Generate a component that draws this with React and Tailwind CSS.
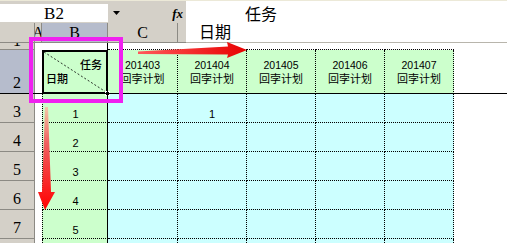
const cjk = { fontFamily: '"Liberation Sans", "Noto Sans CJK SC", sans-serif' };
const serif = { fontFamily: '"Liberation Serif", serif' };

const months = ['201403', '201404', '201405', '201406', '201407'];
const dataRows = [
  { n: 3, b: '1', c: ['', '1', '', '', ''] },
  { n: 4, b: '2', c: ['', '', '', '', ''] },
  { n: 5, b: '3', c: ['', '', '', '', ''] },
  { n: 6, b: '4', c: ['', '', '', '', ''] },
  { n: 7, b: '5', c: ['', '', '', '', ''] },
];

function RowHeader({ label, active, className = '' }) {
  return (
    <div
      className={`flex items-end justify-center overflow-hidden border-r border-b border-[#8c8a84] text-[16px] leading-[18px] text-black ${
        active ? 'bg-[#b6bccc]' : 'bg-[#d4d0c8]'
      } ${className}`}
      style={serif}
    >
      <span className="pb-[1px]">{label}</span>
    </div>
  );
}

export default function App() {
  return (
    <div className="relative w-[507px] h-[243px] overflow-hidden bg-white" style={cjk}>
      {/* Name box + formula bar */}
      <div className="flex h-[43px]">
        <div className="w-[186px] flex flex-col bg-[#d4d0c8]">
          <div className="h-[4px] border-t border-[#ece9d8]" />
          <div className="flex h-[18px]">
            <div className="w-[108px] bg-white flex items-center justify-center text-[17px] leading-none" style={serif}>
              B2
            </div>
            <div className="w-[17px] flex items-center justify-center">
              <svg width="7" height="4" viewBox="0 0 7 4">
                <polygon points="0,0 7,0 3.5,4" fill="#000" />
              </svg>
            </div>
            <div className="flex-1 flex items-center justify-end pr-[3px] text-[13px] italic font-bold leading-none" style={serif}>
              fx
            </div>
          </div>
          <div className="h-[1px]" />
          <div className="flex h-[20px] border-b border-[#8c8a84] text-[16px] leading-none" style={serif}>
            <div className="w-[35px] border-r border-[#8c8a84]" />
            <div className="w-[7px] border-r border-[#8c8a84] overflow-hidden flex items-center justify-center">A</div>
            <div className="w-[66px] bg-[#b6bccc] border-r border-[#8c8a84] flex items-center justify-center">B</div>
            <div className="w-[70px] border-r border-[#8c8a84] flex items-center justify-center">C</div>
            <div className="flex-1" />
          </div>
        </div>
        <div className="flex-1 flex flex-col bg-[#d4d0c8]">
          <div className="h-[4px] border-t border-[#ece9d8]" />
          <div className="flex-1 bg-white border-b border-[#b8b5ac] pl-[13px] pt-[5px] text-[16px] leading-[18px] text-black">
            <div className="pl-[46px]">任务</div>
            <div>日期</div>
          </div>
        </div>
      </div>

      {/* Sheet */}
      <div className="relative grid grid-cols-[35px_7px_66px_70px_69px_69px_69px_69px_53px] grid-rows-[7px_44px_29px_29px_29px_29px_29px_6px]">
        {/* row 1 */}
        <RowHeader label="1" className="!items-start [&>span]:-mt-[11px]" />
        <div />
        <div />
        {months.map((m) => (
          <div key={m} className="border-b border-dotted border-black" />
        ))}
        <div />

        {/* row 2 */}
        <RowHeader label="2" active />
        <div />
        <div className="relative bg-[#ccffcc] border-2 border-black flex flex-col justify-center text-[11px] leading-[14px] font-medium">
          <svg className="absolute inset-0" width="62" height="40" viewBox="0 0 62 40">
            <line x1="0" y1="0" x2="62" y2="40" stroke="#000" strokeWidth="0.8" strokeDasharray="2 2" />
          </svg>
          <div className="relative self-end pr-[4px]">任务</div>
          <div className="relative self-start pl-[2px]">日期</div>
          <div className="absolute -right-[4px] -bottom-[4px] w-[5px] h-[5px] bg-black border border-white" />
        </div>
        {months.map((m) => (
          <div
            key={m}
            className="bg-[#ccffcc] border-r border-dotted border-black flex flex-col items-center justify-center text-[11px] leading-[14px] text-black"
          >
            <span className="text-[10.5px]">{m}</span>
            <span>回孛计划</span>
          </div>
        ))}
        <div />

        {/* rows 3-7 */}
        {dataRows.map((r) => (
          <div key={r.n} className="contents">
            <RowHeader label={r.n} />
            <div />
            <div className="bg-[#ccffcc] border-l border-b border-dotted border-black flex items-end justify-center pb-[1px] text-[11px] leading-[14px]">
              {r.b}
            </div>
            {r.c.map((v, i) => (
              <div
                key={i}
                className="bg-[#ccffff] border-r border-b border-dotted border-black flex items-end justify-center pb-[1px] text-[11px] leading-[14px]"
              >
                {v}
              </div>
            ))}
            <div />
          </div>
        ))}

        {/* row 8 (mostly off-screen) */}
        <div className="bg-[#d4d0c8] border-r border-[#8c8a84]" />
        <div />
        <div className="bg-[#ccffcc] border-l border-dotted border-black" />
        {months.map((m) => (
          <div key={m} className="bg-[#ccffff] border-r border-dotted border-black" />
        ))}
        <div />

        {/* freeze pane lines */}
        <div className="absolute left-0 right-0 top-[50px] h-px bg-black" />
        <div className="absolute top-0 bottom-0 left-[107px] w-px bg-black" />
      </div>

      {/* annotations */}
      <svg className="absolute inset-0 pointer-events-none" width="507" height="243" viewBox="0 0 507 243">
        <defs>
          <linearGradient id="ah" x1="0" y1="0" x2="1" y2="0">
            <stop offset="0" stopColor="#ff5a5a" />
            <stop offset="1" stopColor="#e80000" />
          </linearGradient>
          <linearGradient id="av" x1="0" y1="0" x2="0" y2="1">
            <stop offset="0" stopColor="#f2c9a8" />
            <stop offset="0.35" stopColor="#f06060" />
            <stop offset="1" stopColor="#ff0000" />
          </linearGradient>
        </defs>
        <rect x="31" y="39" width="90" height="62" fill="none" stroke="#f020f0" strokeWidth="4" />
        <polygon points="138,51.5 228,46.5 227,42 247,50 227,58 228,54.5 138,54" fill="url(#ah)" />
        <polygon points="45,107 48,107 51,192 55,192 45,210 38,192 42,192" fill="url(#av)" />
      </svg>
    </div>
  );
}
